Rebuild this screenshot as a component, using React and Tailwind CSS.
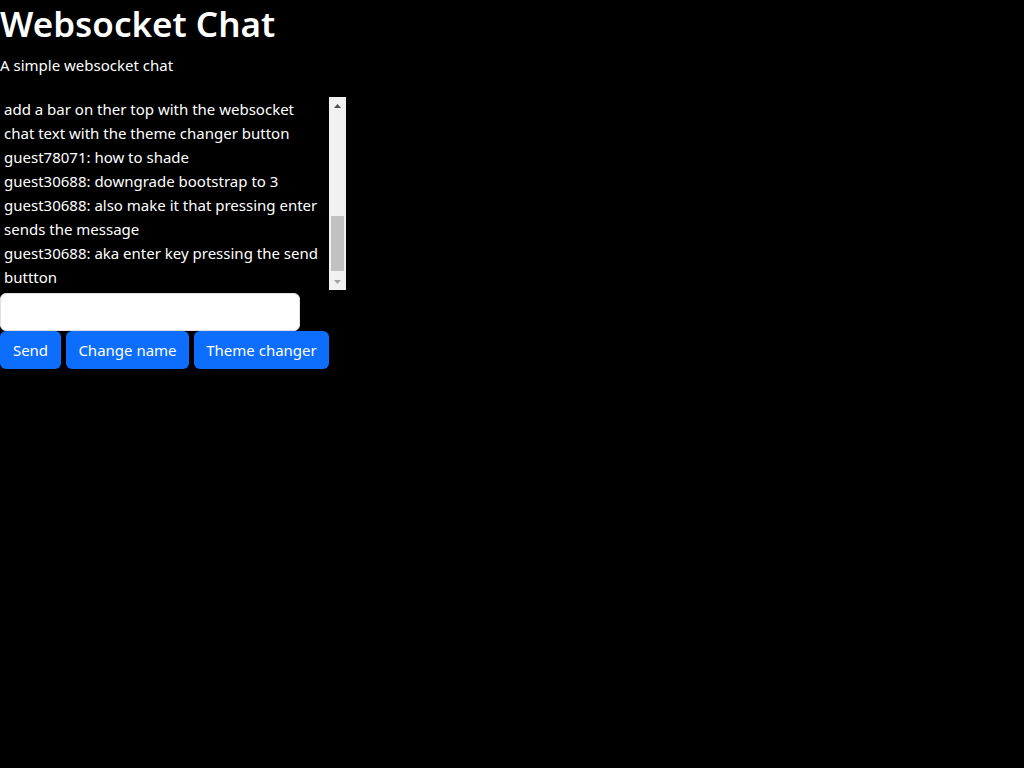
import React from "react";

const lines = [
  "add a bar on ther top with the websocket",
  "chat text with the theme changer button",
  "guest78071: how to shade",
  "guest30688: downgrade bootstrap to 3",
  "guest30688: also make it that pressing enter",
  "sends the message",
  "guest30688: aka enter key pressing the send",
  "buttton",
];

export default function App() {
  return (
    <div
      className="min-h-[768px] w-full bg-black text-white"
      style={{ fontFamily: '"Noto Sans", "Open Sans", sans-serif' }}
    >
      <h1 className="m-0 text-[35px] leading-[48px] font-semibold">Websocket Chat</h1>
      <p className="mt-[5px] text-[15px] leading-[24px]">A simple websocket chat</p>
      <div className="mt-[20px] flex h-[193px] w-[346px]">
        <div className="flex flex-1 flex-col justify-end overflow-hidden pb-[1px] pl-[4px]">
          {lines.map((l, i) => (
            <div key={i} className="whitespace-nowrap text-[15px] leading-[24px]">
              {l}
            </div>
          ))}
        </div>
        <div className="relative flex w-[17px] flex-col bg-[#f1f1f1]">
          <div className="flex h-[17px] items-center justify-center">
            <svg width="7" height="4" viewBox="0 0 7 4">
              <path d="M0 4 L3.5 0 L7 4 Z" fill="#505050" />
            </svg>
          </div>
          <div className="flex-1 px-[2px] pt-[102px] pb-[2px]">
            <div className="h-[55px] w-full bg-[#c1c1c1]" />
          </div>
          <div className="flex h-[17px] items-center justify-center">
            <svg width="7" height="4" viewBox="0 0 7 4">
              <path d="M0 0 L3.5 4 L7 0 Z" fill="#a3a3a3" />
            </svg>
          </div>
        </div>
      </div>
      <input
        type="text"
        className="mt-[3px] block h-[38px] w-[300px] rounded-[6px] border border-[#dee2e6] bg-white px-3 text-black outline-none"
      />
      <div className="flex gap-[5px]">
        <button className="h-[38px] w-[61px] rounded-[6px] bg-[#0d6efd] text-[15px] leading-[24px] text-white">
          Send
        </button>
        <button className="h-[38px] w-[123px] rounded-[6px] bg-[#0d6efd] text-[15px] leading-[24px] text-white">
          Change name
        </button>
        <button className="h-[38px] w-[135px] rounded-[6px] bg-[#0d6efd] text-[15px] leading-[24px] text-white">
          Theme changer
        </button>
      </div>
    </div>
  );
}
